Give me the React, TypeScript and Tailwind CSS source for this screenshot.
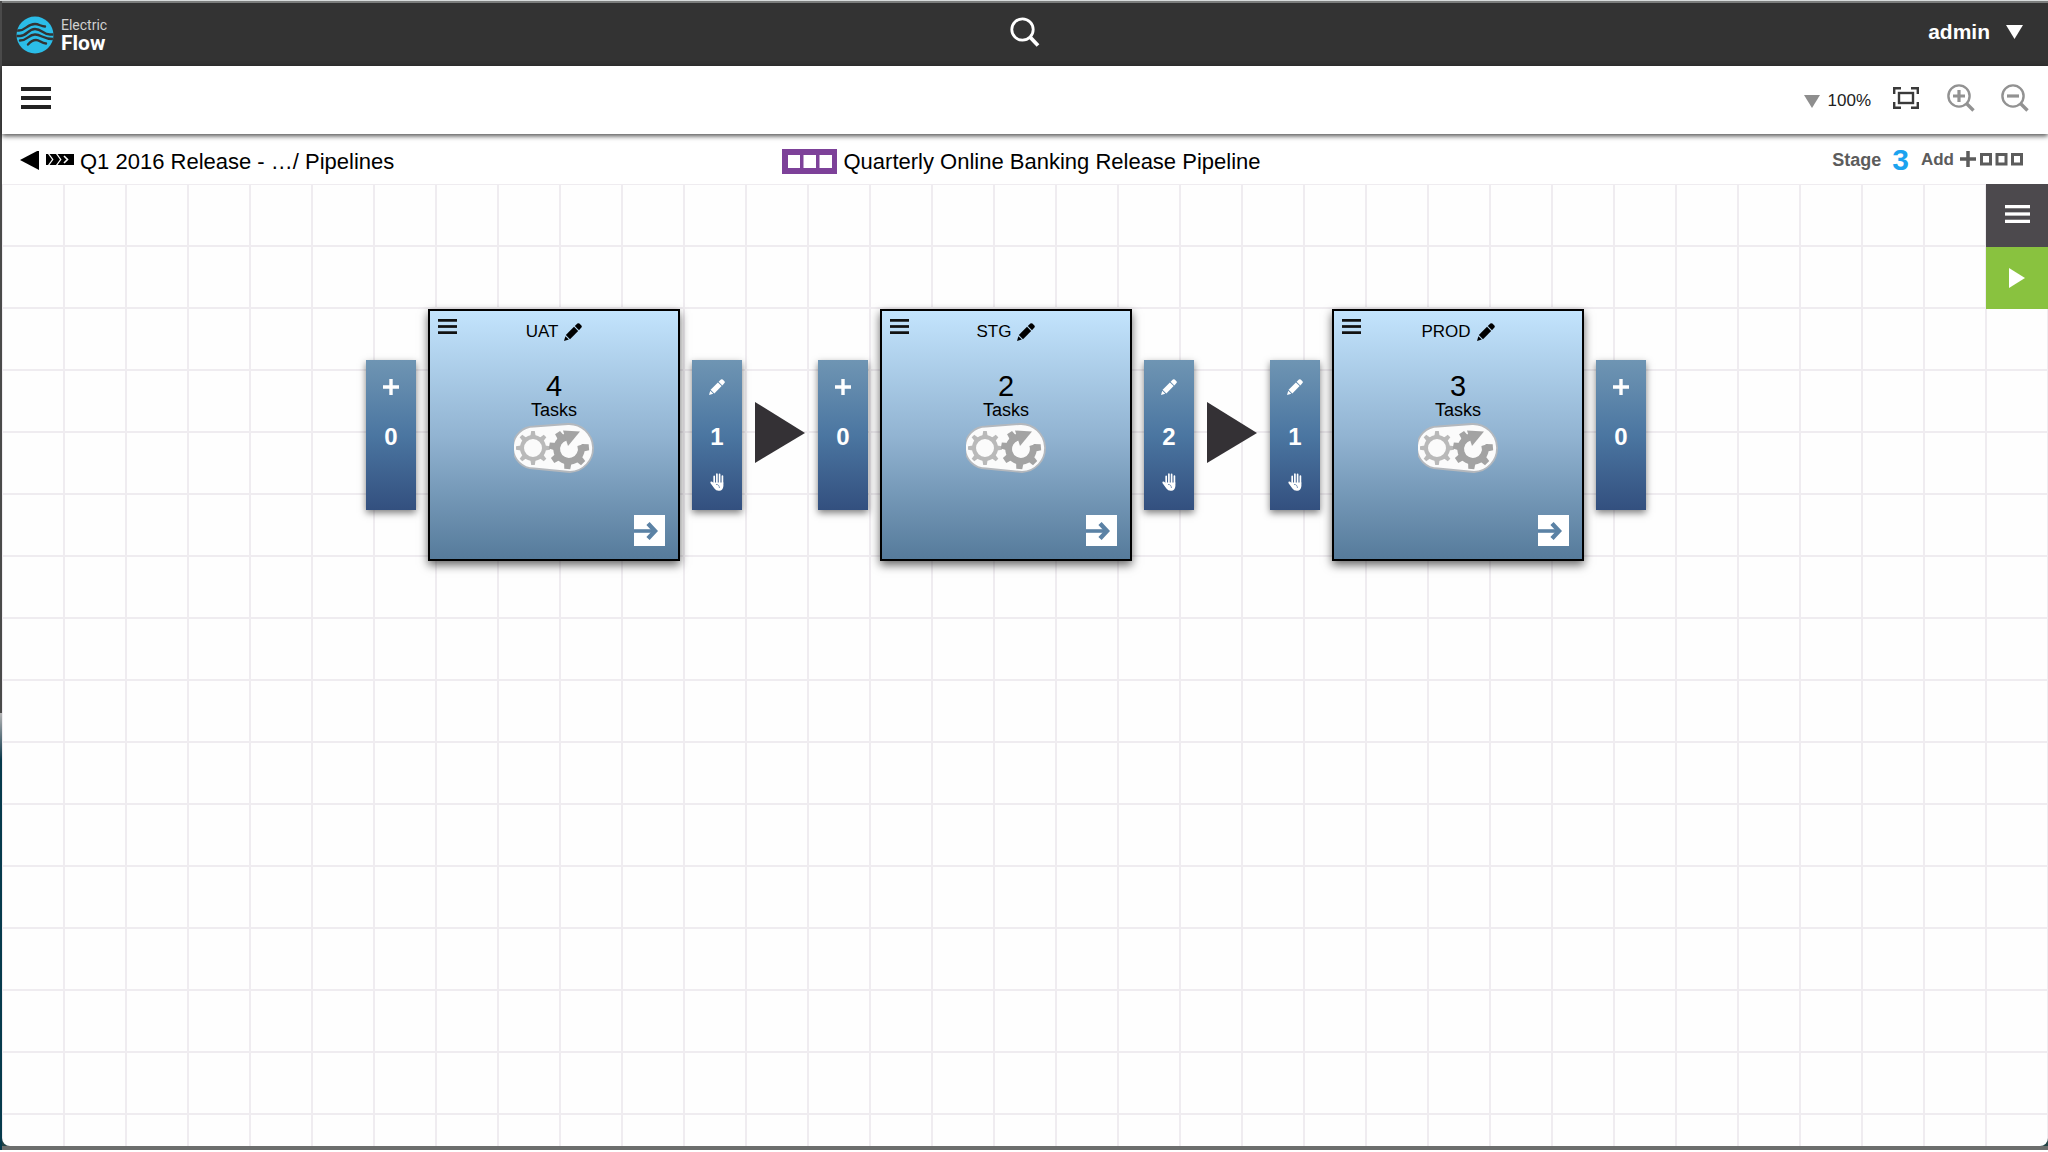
import React from "react";

type GateData = { count: number; manual: boolean };
type StageData = { name: string; tasks: number; before?: GateData; after: GateData };

const stages: StageData[] = [
  { name: "UAT", tasks: 4, before: { count: 0, manual: false }, after: { count: 1, manual: true } },
  { name: "STG", tasks: 2, before: { count: 0, manual: false }, after: { count: 2, manual: true } },
  { name: "PROD", tasks: 3, before: { count: 1, manual: true }, after: { count: 0, manual: false } },
];

function Bars({ className }: { className: string }) {
  return (
    <svg viewBox="0 0 30 22" preserveAspectRatio="none" className={className} fill="currentColor" aria-hidden="true">
      <rect width="30" height="4" />
      <rect y="9" width="30" height="4" />
      <rect y="18" width="30" height="4" />
    </svg>
  );
}

function Pencil({ className }: { className: string }) {
  return (
    <svg viewBox="0 0 18 18" className={className} fill="currentColor" aria-hidden="true">
      <path d="M0 18 L1.4 13.2 L4.8 16.6 Z" />
      <path d="M1.8 12 L10 3.8 L14.2 8 L6 16.2 Z" />
      <path d="M10.8 3 L13.4 0.6 Q14.4 -0.2 15.4 0.6 L17.4 2.6 Q18.2 3.6 17.4 4.6 L15 7.2 Z" />
    </svg>
  );
}

function Hand() {
  return (
    <svg viewBox="0 0 14 18" className="h-[18px] w-[14px]" aria-hidden="true">
      <path
        d="M4.2 11 V3.4 M6.9 9.5 V1.2 M9.6 9.5 V1.4 M12.4 10 V3"
        stroke="#fff"
        strokeWidth="1.7"
        strokeLinecap="round"
        fill="none"
      />
      <path
        d="M3.3 9.5 H13.4 V13 Q13 17.6 9.2 17.8 Q6 18 4.4 15.4 L0.4 10 Q0 8.6 1.6 8.6 Q2.6 8.8 3.6 10.4 Z"
        fill="#fff"
      />
      <path d="M6 11.5 Q9 11 9.500 15" stroke="#5f7fa6" strokeWidth="0.8" fill="none" />
    </svg>
  );
}

function Gears() {
  return (
    <svg viewBox="0 0 80 50" className="h-[50px] w-[80px]" aria-hidden="true">
      <path
        d="M20 3.5 L54 1 A24 24 0 0 1 56 49 L20 45.5 A21 21 0 0 1 20 3.5 Z"
        fill="#fbfbfb"
        stroke="#b4b8bd"
        strokeWidth="1.8"
      />
      <g transform="translate(19 25)" fill="#b9b9b9">
        {[0, 45, 90, 135, 180, 225, 270, 315].map((a) => (
          <path key={a} d="M-2.6 -12 L-1.8 -17 H1.8 L2.6 -12 Z" transform={`rotate(${a})`} />
        ))}
        <circle r="11" fill="none" stroke="#b9b9b9" strokeWidth="4" />
      </g>
      <g transform="translate(55 26)" fill="#a3a3a3">
        {[85, 135, 185, 235, 280, 325].map((a) => (
          <path key={a} d="M-3.8 -13 L-3 -20 H3 L3.8 -13 Z" transform={`rotate(${a})`} />
        ))}
        <path d="M11.6 -4 A12.3 12.3 0 1 1 -3 -11.900" fill="none" stroke="#a3a3a3" strokeWidth="6.8" />
        <path d="M-6 -18.500 L11 -17.500 L-1 -3 Z" />
      </g>
    </svg>
  );
}

function Logo() {
  return (
    <svg viewBox="0 0 38 38" className="size-[38px]" aria-hidden="true">
      <defs>
        <clipPath id="logo-disc">
          <circle cx="19" cy="19" r="18.5" />
        </clipPath>
      </defs>
      <g clipPath="url(#logo-disc)">
        <rect width="38" height="38" fill="#2bbde8" />
        <g fill="none" stroke="#333" strokeWidth="2.4" strokeLinecap="round">
          <path d="M0 14.500 H3 C10 14.500 11 8 19 8 C23 8 25 10.500 29 10.500" />
          <path d="M0 20 H4 C11 20 12 13 19 13 C26 13 27 18.500 34 18.500 H38" />
          <path d="M4 24.500 C12 24.500 12 18.500 19 18.500 C26 18.500 27 23.500 38 23" />
          <path d="M12 28.500 C15 25 17 24 20 24 C24 24 25 27.500 30 27.500" />
        </g>
      </g>
    </svg>
  );
}

function ZoomIcon({ plus }: { plus?: boolean }) {
  return (
    <svg viewBox="0 0 28 28" className="size-7" fill="none" stroke="#929292" aria-hidden="true">
      <circle cx="12" cy="12" r="10.6" strokeWidth="2.4" />
      <path d="M19.5 19.5 L26.5 26.5" strokeWidth="3.4" />
      <path d={plus ? "M6 12 H18 M12 6 V18" : "M6 12 H18"} strokeWidth="3.2" />
    </svg>
  );
}

function Gate({ gate }: { gate: GateData }) {
  return (
    <div className="flex h-[150px] w-[50px] flex-col items-center bg-linear-to-b from-[#6f95b3] via-[#4b76a1] to-[#33507f] pt-[19px] text-white shadow-[0_3px_7px_rgba(0,0,0,0.5)]">
      <button type="button" aria-label={gate.manual ? "Edit gate" : "Add gate"} className="flex h-4 items-center">
        {gate.manual ? (
          <Pencil className="size-4" />
        ) : (
          <svg viewBox="0 0 16 16" className="size-4" stroke="currentColor" strokeWidth="3.4" aria-hidden="true">
            <path d="M0 8 H16 M8 0 V16" />
          </svg>
        )}
      </button>
      <span className="mt-7 text-[24px] leading-7 font-bold">{gate.count}</span>
      {gate.manual && (
        <span className="mt-[22px]">
          <Hand />
        </span>
      )}
    </div>
  );
}

function Stage({ stage }: { stage: StageData }) {
  return (
    <section className="flex items-center gap-3">
      {stage.before && <Gate gate={stage.before} />}
      <div className="relative flex size-[252px] flex-col items-center border-2 border-black bg-linear-to-b from-[#c3e4fd] via-[#92b4d2] to-[#567b9b] pt-2 text-black shadow-[0_4px_9px_rgba(0,0,0,0.6)]">
        <button type="button" aria-label="Stage menu" className="absolute top-2 left-2 text-[#111]">
          <Bars className="h-[15px] w-[19px]" />
        </button>
        <h2 className="flex items-center gap-[6px] text-[17px] leading-[26px]">
          {stage.name}
          <button type="button" aria-label={`Rename ${stage.name}`}>
            <Pencil className="size-[18px]" />
          </button>
        </h2>
        <p className="mt-[27px] text-[29px] leading-7">{stage.tasks}</p>
        <p className="text-[18px] leading-5">Tasks</p>
        <div className="mt-[3px]">
          <Gears />
        </div>
        <button type="button" aria-label={`Open ${stage.name}`} className="absolute right-[13px] bottom-[13px] bg-white">
          <svg viewBox="0 0 31 31" className="size-[31px]" fill="none" stroke="#5b82a5" aria-hidden="true">
            <path d="M0 16 H20" strokeWidth="3.6" />
            <path d="M14 8.5 L21 16 L14 23.5" strokeWidth="4.4" />
          </svg>
        </button>
      </div>
      <Gate gate={stage.after} />
    </section>
  );
}

export default function App() {
  return (
    <div className="flex min-h-screen flex-col bg-white font-['Liberation_Sans',Arial,sans-serif] text-black">
      <div className="flex grow border-t border-b-2 border-t-[#d8dcdc] border-b-white">
        <div className="w-[2px] shrink-0 bg-linear-to-b from-[#4a4a4a] from-62% via-[#b5b5b5] via-62% to-[#063a4c] to-66%" />
        <div className="flex grow flex-col border-t-2 border-b-4 border-t-[#7c7e7d] border-b-[#6c6e6d] bg-[#234446]">
          <header className="grid h-[63px] grid-cols-3 items-center bg-[#333] px-[14px] text-white">
            <a href="#home" aria-label="Electric Flow" className="flex items-center gap-[7px]">
              <Logo />
              <span className="flex flex-col font-['Roboto','Open_Sans',sans-serif]">
                <span className="text-[14px] leading-4 text-[#d0d0d0]">Electric</span>
                <span className="text-[21px] leading-5 font-bold">Flow</span>
              </span>
            </a>
            <button type="button" aria-label="Search" className="justify-self-center pb-[6px]">
              <svg viewBox="0 0 30 30" className="size-[30px]" fill="none" stroke="#fff" aria-hidden="true">
                <circle cx="12.5" cy="12.5" r="10.7" strokeWidth="2.8" />
                <path d="M20 20 L28 28.5" strokeWidth="3.8" />
              </svg>
            </button>
            <button type="button" className="mr-[11px] flex items-center gap-4 justify-self-end pb-[6px] text-[21px] font-bold">
              admin
              <svg viewBox="0 0 17 14" className="h-[14px] w-[17px]" fill="#fff" aria-hidden="true">
                <path d="M0 0 H17 L8.5 14 Z" />
              </svg>
            </button>
          </header>

          <div className="relative z-10 flex h-[68px] items-center justify-between bg-white pr-[19px] pb-1 pl-[19px] shadow-[0_2px_5px_rgba(0,0,0,0.7)]">
            <button type="button" aria-label="Main menu" className="text-[#222]">
              <Bars className="h-[22px] w-[30px]" />
            </button>
            <div className="flex items-center">
              <button type="button" className="mt-[6px] flex items-center gap-2 text-[17px] text-[#222]">
                <svg viewBox="0 0 16 13" className="h-[13px] w-4" fill="#8e8e8e" aria-hidden="true">
                  <path d="M0 0 H16 L8 13 Z" />
                </svg>
                100%
              </button>
              <button type="button" aria-label="Fit to screen" className="ml-[22px]">
                <svg viewBox="0 0 26 22" className="h-[22px] w-[26px]" fill="none" stroke="#3a3a3a" aria-hidden="true">
                  <path d="M1.2 7 V1.2 H8 M18 1.2 H24.8 V7 M24.8 15 V20.8 H18 M8 20.8 H1.2 V15" strokeWidth="2.4" />
                  <rect x="6" y="6" width="14" height="10" strokeWidth="2.4" />
                </svg>
              </button>
              <button type="button" aria-label="Zoom in" className="ml-7">
                <ZoomIcon plus />
              </button>
              <button type="button" aria-label="Zoom out" className="ml-[26px]">
                <ZoomIcon />
              </button>
            </div>
          </div>

          <div className="grid h-[50px] grid-cols-[1fr_auto_1fr] items-center bg-white pt-1 pr-[25px] pl-[18px]">
            <a href="#pipelines" className="flex items-center text-[22px]">
              <svg viewBox="0 0 54 20" className="mr-[6px] h-5 w-[54px]" fill="currentColor" aria-hidden="true">
                <path d="M0 9 L19 -1 V19 Z" />
                <path d="M26 3 H28 L32 8.500 L28 14 H26 Z" />
                <path d="M29.500 3 H36 L40 8.500 L36 14 H29.500 L33.500 8.500 Z" />
                <path d="M37.500 3 H54 V14 H37.500 L41.500 8.500 Z" />
                <path d="M44 5 L47.500 8.500 L44 12" stroke="#fff" strokeWidth="1.600" fill="none" />
              </svg>
              Q1 2016 Release - …/ Pipelines
            </a>
            <h1 className="flex items-center gap-[6px] text-[22px]">
              <svg viewBox="0 0 55 25" className="h-[25px] w-[55px]" aria-hidden="true">
                <rect width="55" height="25" fill="#7d4199" />
                <path d="M6 6 H18 V19 H6 Z M21.500 6 H34 V19 H21.500 Z M37.500 6 H50 V19 H37.500 Z" fill="#fff" />
              </svg>
              Quarterly Online Banking Release Pipeline
            </h1>
            <div className="flex items-center justify-self-end pb-[2px] font-bold text-[#5c5c5c]">
              <span className="text-[18px]">Stage</span>
              <span className="ml-[11px] text-[30px] leading-8 text-[#1ba3ef]">3</span>
              <button type="button" className="ml-3 flex items-center gap-[6px] text-[17px]">
                Add
                <svg viewBox="0 0 63 19" className="h-[19px] w-[63px]" fill="none" stroke="#5c5c5c" aria-hidden="true">
                  <path d="M0 8 H16 M8 0 V16" strokeWidth="3.500" />
                  <path d="M21.500 3.500 H30.500 V13 H21.500 Z M37 3.500 H46 V13 H37 Z M52.500 3.500 H61.500 V13 H52.500 Z" strokeWidth="3" />
                </svg>
              </button>
            </div>
          </div>

          <main className="relative flex grow flex-col rounded-b-lg bg-[#fefefe] bg-[linear-gradient(to_right,#efecf0_2px,transparent_2px),linear-gradient(to_bottom,#efecf0_2px,transparent_2px)] bg-size-[62px_62px] bg-position-[61px_-1px]">
            <div className="flex items-center justify-center pt-[125px] pr-[38px]">
              {stages.map((stage, i) => (
                <React.Fragment key={stage.name}>
                  {i > 0 && (
                    <svg viewBox="0 0 76 68" className="h-[68px] w-[76px]" aria-hidden="true">
                      <path d="M13 1 L63 32 L13 62 Z" fill="#343135" />
                    </svg>
                  )}
                  <Stage stage={stage} />
                </React.Fragment>
              ))}
            </div>
            <aside className="absolute top-0 right-0 flex w-[62px] flex-col">
              <button type="button" aria-label="Pipeline menu" className="flex h-[63px] items-center justify-center bg-[#4c494d] pb-1 text-white">
                <Bars className="h-[18px] w-[25px]" />
              </button>
              <button type="button" aria-label="Run pipeline" className="flex h-[62px] items-center justify-center bg-[#89c23f]">
                <svg viewBox="0 0 16 20" className="h-5 w-4" fill="#fff" aria-hidden="true">
                  <path d="M0 0 L16 10 L0 20 Z" />
                </svg>
              </button>
            </aside>
          </main>
        </div>
      </div>
    </div>
  );
}
